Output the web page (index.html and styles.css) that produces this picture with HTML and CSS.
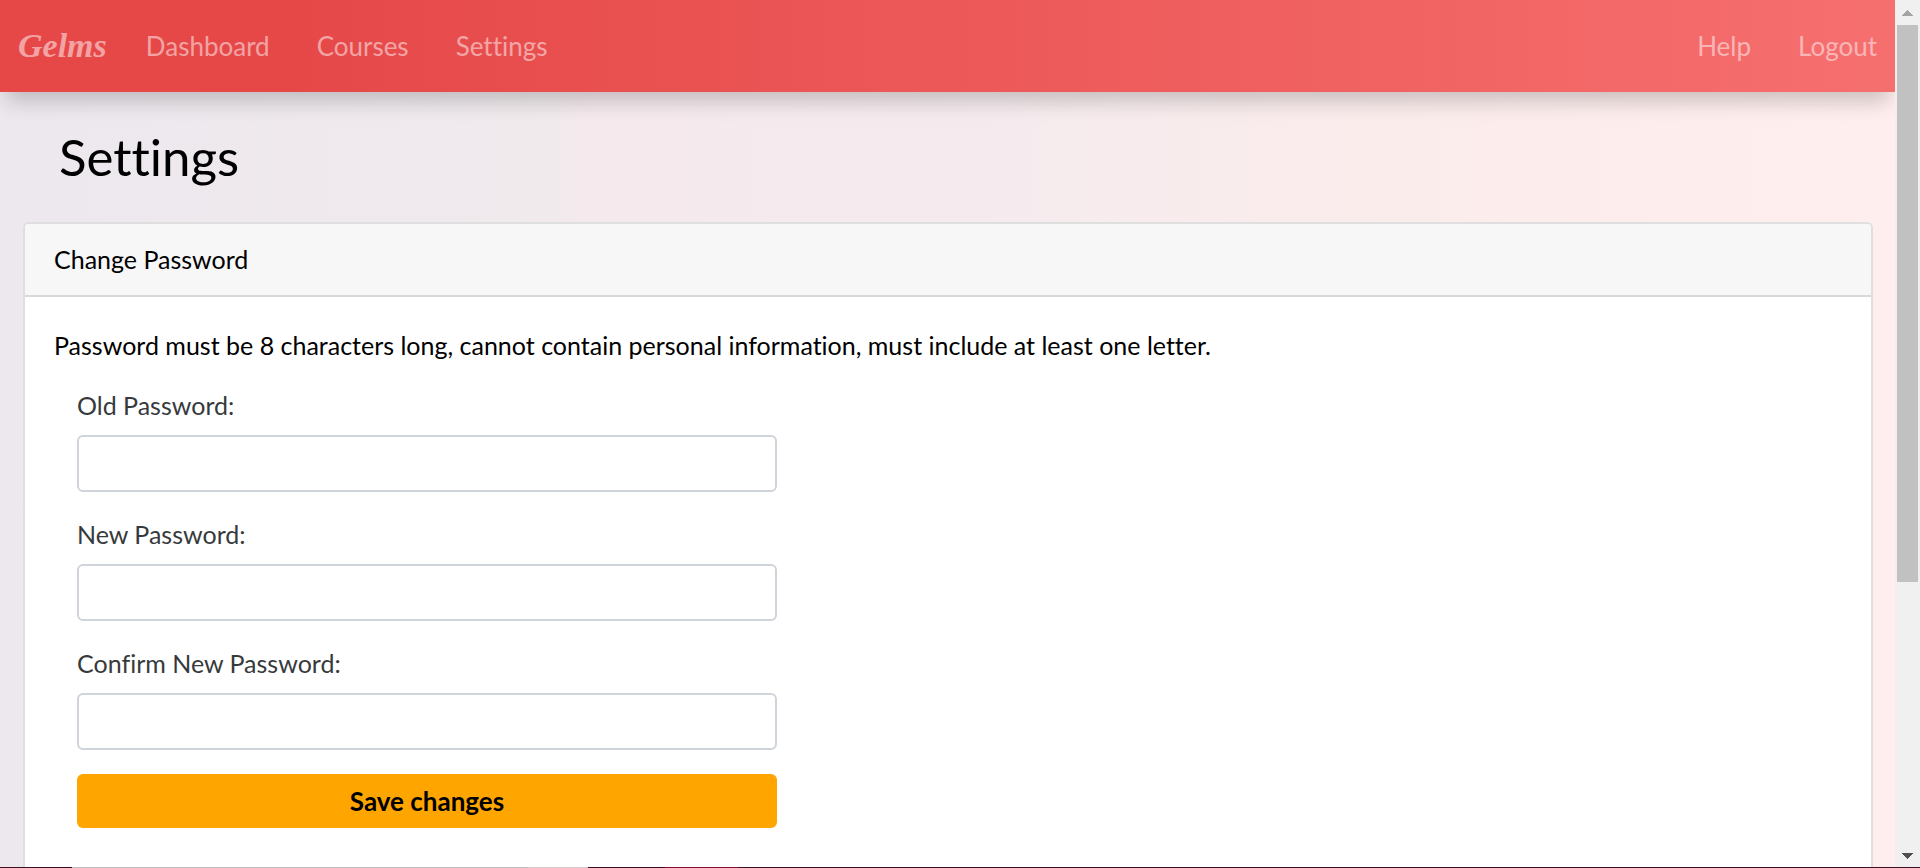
FILE: index.html
```html
<!DOCTYPE html>
<html lang="en">
<head>
<meta charset="utf-8">
<title>Settings - Gelms</title>
<meta name="viewport" content="width=device-width, initial-scale=1">
<link rel="stylesheet" href="styles.css">
</head>
<body>
<div class="window">
  <div class="page">
    <nav class="navbar">
      <a class="brand" href="#">Gelms</a>
      <a class="nav-link" href="#">Dashboard</a>
      <a class="nav-link" href="#">Courses</a>
      <a class="nav-link" href="#">Settings</a>
      <a class="nav-link nav-end" href="#">Help</a>
      <a class="nav-link" href="#">Logout</a>
    </nav>
    <main class="content">
      <h1 class="title">Settings</h1>
      <section class="card">
        <header class="card-header">Change Password</header>
        <div class="card-body">
          <p class="hint">Password must be 8 characters long, cannot contain personal information, must include at least one letter.</p>
          <form class="form">
            <div class="field">
              <label for="old">Old Password:</label>
              <input id="old" type="password">
            </div>
            <div class="field">
              <label for="new">New Password:</label>
              <input id="new" type="password">
            </div>
            <div class="field">
              <label for="confirm">Confirm New Password:</label>
              <input id="confirm" type="password">
            </div>
            <button class="save" type="button">Save changes</button>
          </form>
        </div>
      </section>
    </main>
  </div>
  <div class="scrollbar" aria-hidden="true">
    <svg class="arrow" width="25" height="25" shape-rendering="crispEdges"><path d="M7 16L12.500 10L18 16Z" fill="#a3a3a3"/></svg>
    <div class="thumb"></div>
    <svg class="arrow arrow-down" width="25" height="25" shape-rendering="crispEdges"><path d="M7 11L12.500 17L18 11Z" fill="#505050"/></svg>
  </div>
</div>
<div class="taskbar"></div>
</body>
</html>
```
FILE: styles.css
```css
* { box-sizing: border-box; }
body {
  margin: 0;
  height: 100vh;
  display: flex;
  flex-direction: column;
  overflow: hidden;
  font: 25px/36px Lato, "Open Sans", sans-serif;
  font-variant-ligatures: none;
  color: #000;
}
.window {
  flex: 1;
  min-height: 0;
  display: flex;
}
.page {
  flex: 1;
  min-width: 0;
  overflow: hidden;
  background: linear-gradient(to right, #ede8ee 0%, #f0eaed 29%, #f5e9ed 31%, #f5ebee 52%, #fbecec 72%, #feeeed 100%);
}
.navbar {
  display: flex;
  align-items: center;
  height: 92px;
  padding: 0 18px;
  background: linear-gradient(to right, #e64848 0%, #e64848 15%, #f66f6f 100%);
  box-shadow: 0 15px 20px -6px rgba(0, 0, 0, 0.2);
}
.brand, .nav-link {
  color: rgba(255, 255, 255, 0.5);
  text-decoration: none;
}
.nav-link {
  margin-left: 47px;
  font-size: 26px;
}
.brand {
  margin-right: -8px;
  font: italic bold 34px/48px "Liberation Serif", serif;
}
.nav-end { margin-left: auto; }
.content { padding: 36px 22px 0 23px; }
.title {
  margin: 0 0 36px;
  padding-left: 36px;
  font-weight: 400;
  font-size: 51px;
  line-height: 58px;
}
.card {
  min-height: 800px;
  border: 2px solid #dfdfdf;
  border-radius: 6px;
  background: #fff;
}
.card-header {
  padding: 18px 29px;
  line-height: 35px;
  background: #f7f7f7;
  border-bottom: 2px solid #d8d8d8;
  border-radius: 4px 4px 0 0;
}
.card-body { padding: 30px 29px; }
.hint { margin: 0 0 24px; }
.form {
  display: flex;
  flex-direction: column;
  gap: 24px;
  width: calc(100% * 5 / 12);
  padding: 0 22px 0 23px;
}
.field {
  display: flex;
  flex-direction: column;
  gap: 12px;
  color: #373a3c;
}
.field input {
  height: 57px;
  padding: 0 18px;
  border: 2px solid #ced4da;
  border-radius: 6px;
  background: #fff;
  font: inherit;
}
.save {
  height: 54px;
  border: 0;
  border-radius: 6px;
  background: #ffa500;
  color: #000;
  font: inherit;
  font-size: 26px;
  font-weight: 700;
}
.scrollbar {
  width: 25px;
  display: flex;
  flex-direction: column;
  background: #f0f0f0;
}
.arrow { display: block; flex: none; }
.thumb {
  height: 68%;
  max-height: 557px;
  margin: 0 2px;
  background: #c1c1c1;
}
.arrow-down { margin-top: auto; }
.taskbar {
  height: 1px;
  background: linear-gradient(to right, #400c20 0 72px, #bbb 72px 528px, #d6c8cb 528px 588px, #400c20 588px 665px, #870a32 665px 738px, #400c20 738px);
}
```
